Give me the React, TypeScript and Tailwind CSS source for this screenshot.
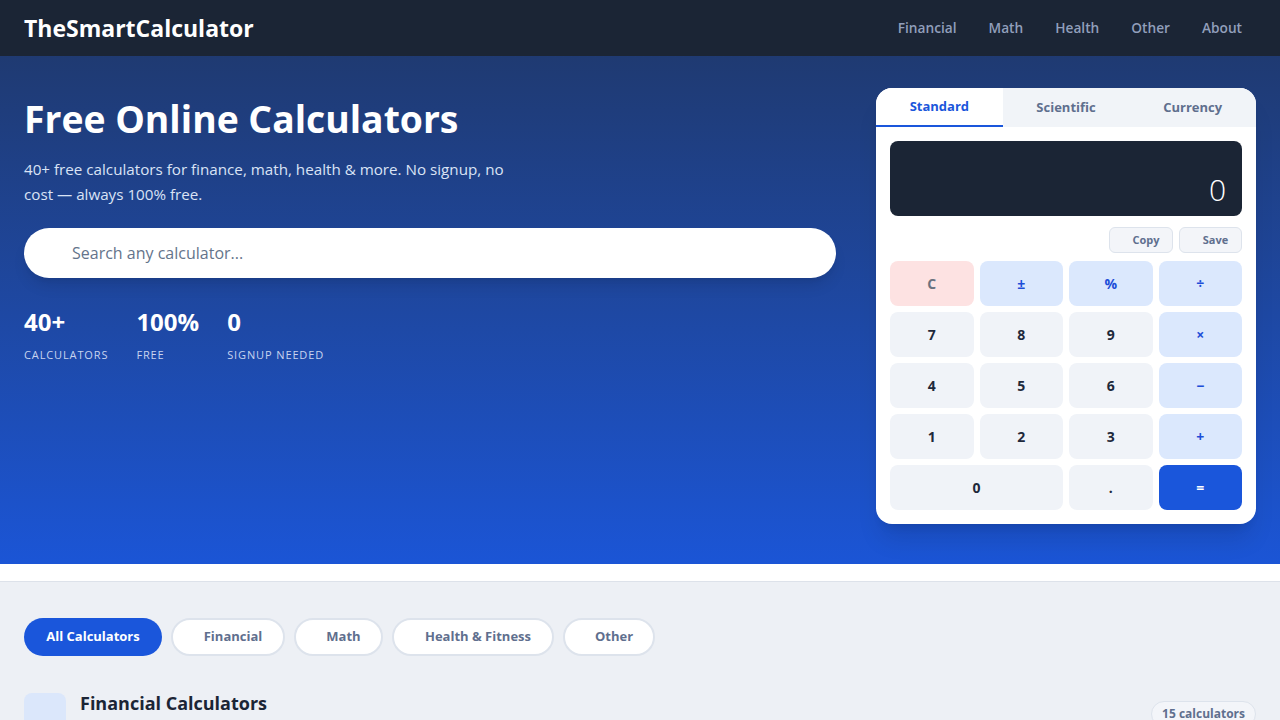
import React from "react";

const navLinks = ["Financial", "Math", "Health", "Other", "About"];

type Key = { label: string; kind: "clear" | "op" | "num" | "eq"; wide?: boolean };

const keys: Key[] = [
  { label: "C", kind: "clear" },
  { label: "±", kind: "op" },
  { label: "%", kind: "op" },
  { label: "÷", kind: "op" },
  { label: "7", kind: "num" },
  { label: "8", kind: "num" },
  { label: "9", kind: "num" },
  { label: "×", kind: "op" },
  { label: "4", kind: "num" },
  { label: "5", kind: "num" },
  { label: "6", kind: "num" },
  { label: "−", kind: "op" },
  { label: "1", kind: "num" },
  { label: "2", kind: "num" },
  { label: "3", kind: "num" },
  { label: "+", kind: "op" },
  { label: "0", kind: "num", wide: true },
  { label: ".", kind: "num" },
  { label: "=", kind: "eq" },
];

const keyStyle: Record<Key["kind"], string> = {
  clear: "bg-[#fde2e2] text-[#6b7280]",
  op: "bg-[#dbe8fd] text-[#1d4ed8]",
  num: "bg-[#f0f3f8] text-[#1e293b]",
  eq: "bg-[#1a56db] text-white",
};

function Calculator() {
  return (
    <div className="w-[380px] shrink-0 overflow-hidden rounded-2xl bg-white shadow-xl">
      <div className="flex h-[39px] text-[13px] font-bold">
        <div className="flex flex-1 items-center justify-center border-b-2 border-[#1a56db] bg-white text-[#1a56db]">
          Standard
        </div>
        <div className="flex flex-1 items-center justify-center bg-[#f1f4f8] text-[#5f6f8e]">Scientific</div>
        <div className="flex flex-1 items-center justify-center bg-[#f1f4f8] text-[#5f6f8e]">Currency</div>
      </div>
      <div className="px-[14px] pb-[14px] pt-[14px]">
        <div className="flex h-[75px] items-end justify-end rounded-lg bg-[#1b2535] px-4 pb-[11px]">
          <span className="text-[30px] font-light leading-none text-white">0</span>
        </div>
        <div className="mt-[11px] flex justify-end gap-[6px]">
          <button className="h-[26px] w-[64px] rounded-md border border-[#dde3ec] bg-[#f3f5f9] pl-[10px] text-[11px] font-bold text-[#5f6f8e]">
            Copy
          </button>
          <button className="h-[26px] w-[63px] rounded-md border border-[#dde3ec] bg-[#f3f5f9] pl-[10px] text-[11px] font-bold text-[#5f6f8e]">
            Save
          </button>
        </div>
        <div className="mt-[8px] grid grid-cols-4 gap-[6px]">
          {keys.map((k) => (
            <button
              key={k.label}
              className={`h-[45px] rounded-lg text-[14px] font-bold ${keyStyle[k.kind]} ${k.wide ? "col-span-2" : ""}`}
            >
              {k.label}
            </button>
          ))}
        </div>
      </div>
    </div>
  );
}

const filters = [
  { label: "All Calculators", active: true, w: "w-[138px]" },
  { label: "Financial", active: false, w: "w-[114px]" },
  { label: "Math", active: false, w: "w-[89px]" },
  { label: "Health & Fitness", active: false, w: "w-[162px]" },
  { label: "Other", active: false, w: "w-[92px]" },
];

export default function App() {
  return (
    <div className="min-h-[720px] bg-[#edf0f5]" style={{ fontFamily: '"Open Sans", "Noto Sans", sans-serif' }}>
      <header className="flex h-[56px] items-center justify-between bg-[#1b2535] pl-6 pr-[22px]">
        <div className="text-[23px] font-bold text-white">TheSmartCalculator</div>
        <nav className="flex pt-[1px]">
          {navLinks.map((l) => (
            <a key={l} className="px-4 text-[13.7px] font-semibold text-[#919fbb]">
              {l}
            </a>
          ))}
        </nav>
      </header>

      <section className="bg-gradient-to-b from-[#1f3a72] to-[#1b55d6] px-6 pb-[40px] pt-[32px]">
        <div className="flex gap-10">
          <div className="flex-1 pt-[9px]">
            <h1 className="text-[37.3px] font-bold leading-[44px] text-white">Free Online Calculators</h1>
            <p className="mt-[16px] max-w-[500px] text-[15.2px] leading-[25px] text-[#dae3f5]">
              40+ free calculators for finance, math, health &amp; more. No signup, no cost — always 100% free.
            </p>
            <div className="mt-[21px] flex h-[50px] items-center rounded-full bg-white pl-[48px] shadow-lg">
              <span className="text-[16px] text-[#64748b]">Search any calculator...</span>
            </div>
            <div className="mt-[28px] flex gap-7">
              <div>
                <div className="text-[24px] font-bold leading-[32px] text-white">40+</div>
                <div className="mt-[9px] text-[11px] tracking-[0.08em] text-[#c8d4ef]">CALCULATORS</div>
              </div>
              <div>
                <div className="text-[24px] font-bold leading-[32px] text-white">100%</div>
                <div className="mt-[9px] text-[11px] tracking-[0.08em] text-[#c8d4ef]">FREE</div>
              </div>
              <div>
                <div className="text-[24px] font-bold leading-[32px] text-white">0</div>
                <div className="mt-[9px] text-[11px] tracking-[0.08em] text-[#c8d4ef]">SIGNUP NEEDED</div>
              </div>
            </div>
          </div>
          <Calculator />
        </div>
      </section>

      <div className="h-[18px] border-b border-[#dde2ea] bg-white" />

      <main className="px-6 pt-[36px]">
        <div className="flex gap-[9px]">
          {filters.map((f) => (
            <button
              key={f.label}
              className={`h-[38px] rounded-full text-[13px] font-bold ${f.w} ${
                f.active
                  ? "bg-[#1a56db] text-white"
                  : "border-2 border-[#dde3ec] bg-white pl-[10px] text-[#5f6f8e]"
              }`}
            >
              {f.label}
            </button>
          ))}
        </div>
        <div className="mt-[37px] flex items-start justify-between">
          <div className="flex items-start gap-[14px]">
            <div className="h-[42px] w-[42px] rounded-lg bg-[#dbe7fb]" />
            <h2 className="-mt-[1px] text-[18px] font-bold leading-[22px] text-[#1b2535]">Financial Calculators</h2>
          </div>
          <div className="mt-[8px] rounded-full border border-[#dde3ec] bg-[#f3f5f9] px-[10px] py-[3px] text-[12px] font-bold text-[#5f6f8e]">
            15 calculators
          </div>
        </div>
      </main>
    </div>
  );
}
